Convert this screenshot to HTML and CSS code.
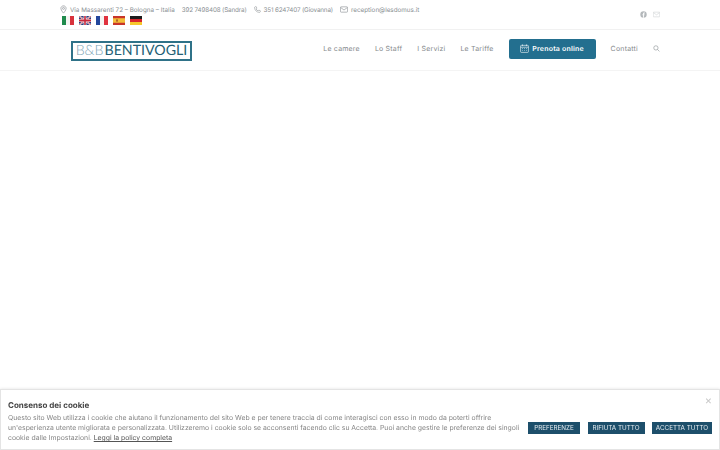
FILE: index.html
```html
<!DOCTYPE html>
<html lang="it">

<head>
  <meta charset="UTF-8">
  <meta name="viewport" content="width=device-width, initial-scale=1.0">
  <title>B&amp;B Bentivogli</title>
  <link rel="stylesheet" href="styles.css">
</head>

<body>

  <div class="topbar">
    <div class="container topbar-inner">
      <div class="topbar-left">
        <div class="contact-row">
          <span class="contact">
            <svg class="ico" viewBox="0 0 10 12"><path d="M5 .8C2.9.8 1.3 2.4 1.3 4.4 1.3 7 5 11.2 5 11.2S8.700 7 8.700 4.400C8.700 2.400 7.100.8 5 .8Z"/><circle cx="5" cy="4.400" r="1.400"/></svg>
            Via Massarenti 72 – Bologna – Italia
          </span>
          <span class="contact contact-tel">392 7498408 (Sandra)</span>
          <span class="contact contact-tel">
            <svg class="ico" viewBox="0 0 12 12"><path d="M2.300 1 4.200 1.500 4.800 4 3.600 5C4.300 6.500 5.500 7.700 7 8.400L8 7.200 10.500 7.800 11 9.700C10.800 10.500 10 11 9.200 11 4.700 10.800 1.200 7.300 1 2.800 1 2 1.500 1.200 2.300 1Z"/></svg>
            351 6247407 (Giovanna)
          </span>
          <span class="contact">
            <svg class="ico ico-wide" viewBox="0 0 12 10"><rect x=".6" y="1" width="10.800" height="8" rx="1.200"/><path d="M1 2 6 5.800 11 2"/></svg>
            reception@lesdomus.it
          </span>
        </div>
        <div class="flags">
          <svg class="flag" viewBox="0 0 3 2" preserveAspectRatio="none"><rect width="1" height="2" fill="#1f8a4c"/><rect x="1" width="1" height="2" fill="#f4f4f2"/><rect x="2" width="1" height="2" fill="#d8323c"/></svg>
          <svg class="flag" viewBox="0 0 30 20" preserveAspectRatio="none"><rect width="30" height="20" fill="#2b3f7e"/><path d="M0 0 30 20M30 0 0 20" stroke="#f2f2f2" stroke-width="4"/><path d="M0 0 30 20M30 0 0 20" stroke="#c8283c" stroke-width="1.500"/><path d="M15 0V20M0 10H30" stroke="#f2f2f2" stroke-width="7"/><path d="M15 0V20M0 10H30" stroke="#c8283c" stroke-width="4"/></svg>
          <svg class="flag" viewBox="0 0 3 2" preserveAspectRatio="none"><rect width="1" height="2" fill="#23479c"/><rect x="1" width="1" height="2" fill="#f4f4f2"/><rect x="2" width="1" height="2" fill="#e0333f"/></svg>
          <svg class="flag" viewBox="0 0 12 8" preserveAspectRatio="none"><rect width="12" height="8" fill="#c8352a"/><rect y="2" width="12" height="4" fill="#f2bf3a"/><rect x="3" y="3" width="2" height="2" fill="#b5652a"/></svg>
          <svg class="flag" viewBox="0 0 3 3" preserveAspectRatio="none"><rect width="3" height="1" fill="#1c1c1c"/><rect y="1" width="3" height="1" fill="#d8262c"/><rect y="2" width="3" height="1" fill="#f6c72c"/></svg>
        </div>
      </div>
      <div class="social">
        <svg class="social-fb" viewBox="0 0 12 12"><circle cx="6" cy="6" r="5.500" fill="#b4b8bb"/><path d="M6.700 11.500V7.400H8L8.200 5.800H6.700V4.900C6.700 4.400 6.900 4.100 7.500 4.100H8.300V2.700C7 2.400 5.200 2.500 5.200 4.600V5.800H3.900V7.400H5.200V11.500Z" fill="#fff"/></svg>
        <svg class="social-mail" viewBox="0 0 12 10"><rect x=".5" y="1" width="11" height="8" rx=".8"/><path d="M1 2 6 5.500 11 2"/></svg>
      </div>
    </div>
  </div>

  <header class="header">
    <div class="container header-inner">
      <a class="logo" href="#"><span class="logo-thin">B&amp;B</span>BENTIVOGLI</a>
      <nav class="menu">
        <a href="#">Le camere</a>
        <a href="#">Lo Staff</a>
        <a href="#">I Servizi</a>
        <a href="#">Le Tariffe</a>
        <a class="btn-prenota" href="#">
          <svg viewBox="0 0 12 12"><rect x=".8" y="1.800" width="10.400" height="9.400" rx="1"/><path d="M.8 4.300H11.200M3.300.6V2.800M8.700.6V2.800M3 6H4M5.500 6H6.500M8 6H9M3 8.500H4M5.500 8.500H6.500M8 8.500H9"/></svg>
          Prenota online
        </a>
        <a href="#">Contatti</a>
        <svg class="search" viewBox="0 0 12 12"><circle cx="5" cy="5" r="3.700"/><path d="M7.800 7.800 11 11"/></svg>
      </nav>
    </div>
  </header>

  <main class="hero"></main>

  <div class="cookie">
    <span class="cookie-close">×</span>
    <h4>Consenso dei cookie</h4>
    <div class="cookie-row">
      <p>Questo sito Web utilizza i cookie che aiutano il funzionamento del sito Web e per tenere traccia di come interagisci con esso in modo da poterti offrire un'esperienza utente migliorata e personalizzata. Utilizzeremo i cookie solo se acconsenti facendo clic su Accetta. Puoi anche gestire le preferenze dei singoli cookie dalle Impostazioni. <a href="#">Leggi la policy completa</a></p>
      <div class="cookie-btns">
        <button type="button" class="btn-pref">PREFERENZE</button>
        <button type="button" class="btn-rifiuta">RIFIUTA TUTTO</button>
        <button type="button" class="btn-accetta">ACCETTA TUTTO</button>
      </div>
    </div>
  </div>

</body>

</html>
```

FILE: styles.css
```css
html,
body {
  height: 100%;
}

body {
  font-family: 'Inter', 'Liberation Sans', sans-serif;
  background-color: #fff;
  color: #8a8f93;
  margin: 0;
  padding: 0;
  overflow: hidden;
  text-rendering: geometricPrecision;
}

a {
  color: inherit;
  text-decoration: none;
}

.container {
  width: 600px;
  margin: auto;
}

/* barra superiore */
.topbar {
  height: 29px;
  border-bottom: 1px solid #f1f1f1;
  font-size: 6.300px;
}

.topbar-inner {
  display: flex;
  justify-content: space-between;
}

.contact-row {
  display: flex;
  gap: 7px;
  height: 15px;
  padding-top: 2px;
  align-items: center;
}

.contact {
  display: flex;
  align-items: center;
  gap: 3px;
  white-space: nowrap;
}

.contact-tel {
  letter-spacing: -0.15px;
}

.ico {
  width: 7px;
  height: 9px;
  fill: none;
  stroke: #8f9498;
  stroke-width: 1;
}

.ico-wide {
  width: 8px;
}

.flags {
  display: flex;
  gap: 5px;
  padding-left: 2px;
  margin-top: -1px;
}

.flag {
  width: 12px;
  height: 9px;
  display: block;
}

.social {
  display: flex;
  gap: 6px;
  padding-top: 11px;
}

.social svg {
  width: 7px;
  height: 7px;
}

.social-mail {
  fill: none;
  stroke: #c3c7ca;
  stroke-width: .8;
}

/* cabecera */
.header {
  height: 40px;
  border-bottom: 1px solid #f4f4f4;
}

.header-inner {
  display: flex;
  justify-content: space-between;
  align-items: center;
  height: 100%;
}

.logo {
  margin: 2px 0 0 11px;
  width: 121px;
  height: 20px;
  box-sizing: border-box;
  border: 2px solid #2f7288;
  display: flex;
  align-items: center;
  justify-content: center;
  font-family: 'Lato', sans-serif;
  font-size: 14.200px;
  line-height: 1;
  color: #245f75;
  white-space: nowrap;
}

.logo-thin {
  font-weight: 300;
  color: #7ea6b5;
  margin-right: 1px;
}

.menu {
  display: flex;
  align-items: center;
  gap: 15px;
  margin-top: -3px;
  font-size: 7px;
  letter-spacing: .2px;
  color: #85898c;
  white-space: nowrap;
}

.btn-prenota {
  display: flex;
  align-items: center;
  justify-content: center;
  gap: 3px;
  width: 87px;
  height: 20px;
  background-color: #236f8f;
  color: #fff;
  font-weight: 600;
  border-radius: 2px;
}

.btn-prenota svg {
  width: 9px;
  height: 9px;
  fill: none;
  stroke: #fff;
  stroke-width: .8;
}

.search {
  width: 7px;
  height: 7px;
  fill: none;
  stroke: #8f9498;
  stroke-width: 1.100;
}

.hero {
  height: 318px;
}

/* banner cookie */
.cookie {
  position: fixed;
  left: 0;
  right: 0;
  bottom: 0;
  height: 61px;
  box-sizing: border-box;
  padding: 10px 7px 0;
  background-color: #fff;
  border: 1px solid #e4e4e4;
  box-shadow: 0 0 3px rgba(0, 0, 0, 0.12);
}

.cookie h4 {
  margin: 0 0 3px;
  font-size: 8px;
  line-height: 10px;
  font-weight: 700;
  color: #444;
}

.cookie-row {
  display: flex;
  justify-content: space-between;
  align-items: center;
}

.cookie p {
  margin: 0;
  flex: none;
  width: 514px;
  font-size: 6.850px;
  line-height: 10px;
  color: #858585;
}

.cookie p a {
  text-decoration: underline;
  color: #555;
}

.cookie-close {
  position: absolute;
  top: 3px;
  right: 7px;
  font-size: 11px;
  color: #c8c8c8;
}

.cookie-btns {
  display: flex;
  gap: 7.500px;
}

.cookie-btns button {
  height: 12px;
  padding: 0;
  border: none;
  background-color: #1d4f6b;
  color: #e8eef2;
  font-family: inherit;
  font-size: 6.300px;
  white-space: nowrap;
  cursor: pointer;
}

.btn-pref {
  width: 52px;
}

.btn-rifiuta {
  width: 57px;
}

.btn-accetta {
  width: 60px;
}
```
